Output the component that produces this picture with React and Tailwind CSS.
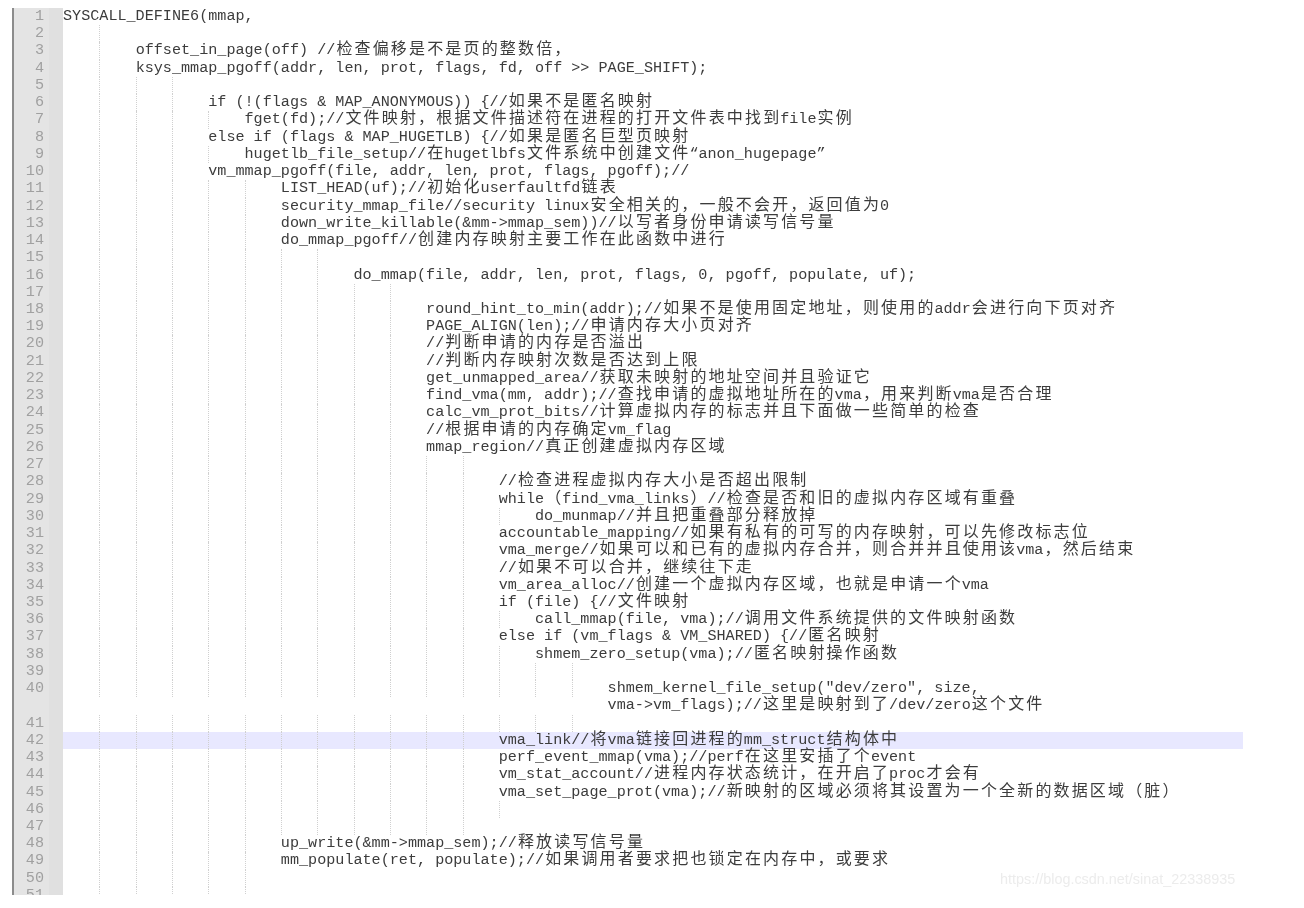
const lines = [
  { n: 1, k: 0, text: "SYSCALL_DEFINE6(mmap," },
  { n: 2, guides: 1 },
  { n: 3, k: 2, text: "offset_in_page(off) //检查偏移是不是页的整数倍，" },
  { n: 4, k: 2, text: "ksys_mmap_pgoff(addr, len, prot, flags, fd, off >> PAGE_SHIFT);" },
  { n: 5, guides: 3 },
  { n: 6, k: 4, text: "if (!(flags & MAP_ANONYMOUS)) {//如果不是匿名映射" },
  { n: 7, k: 5, text: "fget(fd);//文件映射，根据文件描述符在进程的打开文件表中找到file实例" },
  { n: 8, k: 4, text: "else if (flags & MAP_HUGETLB) {//如果是匿名巨型页映射" },
  { n: 9, k: 5, text: "hugetlb_file_setup//在hugetlbfs文件系统中创建文件“anon_hugepage”" },
  { n: 10, k: 4, text: "vm_mmap_pgoff(file, addr, len, prot, flags, pgoff);//" },
  { n: 11, k: 6, text: "LIST_HEAD(uf);//初始化userfaultfd链表" },
  { n: 12, k: 6, text: "security_mmap_file//security linux安全相关的，一般不会开，返回值为0" },
  { n: 13, k: 6, text: "down_write_killable(&mm->mmap_sem))//以写者身份申请读写信号量" },
  { n: 14, k: 6, text: "do_mmap_pgoff//创建内存映射主要工作在此函数中进行" },
  { n: 15, guides: 7 },
  { n: 16, k: 8, text: "do_mmap(file, addr, len, prot, flags, 0, pgoff, populate, uf);" },
  { n: 17, guides: 9 },
  { n: 18, k: 10, text: "round_hint_to_min(addr);//如果不是使用固定地址，则使用的addr会进行向下页对齐" },
  { n: 19, k: 10, text: "PAGE_ALIGN(len);//申请内存大小页对齐" },
  { n: 20, k: 10, text: "//判断申请的内存是否溢出" },
  { n: 21, k: 10, text: "//判断内存映射次数是否达到上限" },
  { n: 22, k: 10, text: "get_unmapped_area//获取未映射的地址空间并且验证它" },
  { n: 23, k: 10, text: "find_vma(mm, addr);//查找申请的虚拟地址所在的vma，用来判断vma是否合理" },
  { n: 24, k: 10, text: "calc_vm_prot_bits//计算虚拟内存的标志并且下面做一些简单的检查" },
  { n: 25, k: 10, text: "//根据申请的内存确定vm_flag" },
  { n: 26, k: 10, text: "mmap_region//真正创建虚拟内存区域" },
  { n: 27, guides: 11 },
  { n: 28, k: 12, text: "//检查进程虚拟内存大小是否超出限制" },
  { n: 29, k: 12, text: "while（find_vma_links）//检查是否和旧的虚拟内存区域有重叠" },
  { n: 30, k: 13, text: "do_munmap//并且把重叠部分释放掉" },
  { n: 31, k: 12, text: "accountable_mapping//如果有私有的可写的内存映射，可以先修改标志位" },
  { n: 32, k: 12, text: "vma_merge//如果可以和已有的虚拟内存合并，则合并并且使用该vma，然后结束" },
  { n: 33, k: 12, text: "//如果不可以合并，继续往下走" },
  { n: 34, k: 12, text: "vm_area_alloc//创建一个虚拟内存区域，也就是申请一个vma" },
  { n: 35, k: 12, text: "if (file) {//文件映射" },
  { n: 36, k: 13, text: "call_mmap(file, vma);//调用文件系统提供的文件映射函数" },
  { n: 37, k: 12, text: "else if (vm_flags & VM_SHARED) {//匿名映射" },
  { n: 38, k: 13, text: "shmem_zero_setup(vma);//匿名映射操作函数" },
  { n: 39, guides: 14 },
  { n: 40, k: 15, text: 'shmem_kernel_file_setup("dev/zero", size,' },
  { k: 15, guides: 0, text: "vma->vm_flags);//这里是映射到了/dev/zero这个文件" },
  { n: 41, guides: 14 },
  { n: 42, k: 12, active: true, text: "vma_link//将vma链接回进程的mm_struct结构体中" },
  { n: 43, k: 12, text: "perf_event_mmap(vma);//perf在这里安插了个event" },
  { n: 44, k: 12, text: "vm_stat_account//进程内存状态统计，在开启了proc才会有" },
  { n: 45, k: 12, text: "vma_set_page_prot(vma);//新映射的区域必须将其设置为一个全新的数据区域（脏）" },
  { n: 46, guides: 12 },
  { n: 47, guides: 11 },
  { n: 48, k: 6, text: "up_write(&mm->mmap_sem);//释放读写信号量" },
  { n: 49, k: 6, text: "mm_populate(ret, populate);//如果调用者要求把也锁定在内存中，或要求" },
  { n: 50, guides: 5 },
  { n: 51, guides: 5 },
];

// CJK runs sit on a two-column pitch, so a 16px glyph gets tracking up to 18.16px
function CodeText({ text }) {
  const parts = text.split(/([\u3000-\u9fff\uff00-\uffef]+)/);
  return parts.map((part, i) =>
    i % 2 === 1 ? (
      <span
        key={i}
        className="ml-[1.08px] mr-[-1.08px] font-['Noto_Sans_CJK_SC',sans-serif] text-[16px] leading-[0] tracking-[2.16px]"
      >
        {part}
      </span>
    ) : (
      part
    )
  );
}

function Row({ n, k = 0, text, guides, active }) {
  const guideCount = guides ?? Math.max(k - 1, 0);

  return (
    <div className="flex h-[17.24px] leading-[17.24px]">
      <div className="flex w-[51px] shrink-0 border-l-2 border-[#8c8c8c] bg-[#e4e4e4]">
        <span className="w-[30px] text-right text-[15.14px] text-[#a0a0a0]">{n}</span>
        <span className="ml-auto h-full w-[14px] bg-[#e0e0e0]" />
      </div>
      <div className={`relative flex-1 ${active ? "bg-[#e8e8ff]" : ""}`}>
        <div className="absolute inset-y-0 left-px flex">
          {Array.from({ length: guideCount }, (_, i) => (
            <span key={i} className="h-full w-[36.35px] shrink-0 border-r border-dotted border-[#d0d0d0]" />
          ))}
        </div>
        {text && (
          <div className="relative whitespace-pre text-[15.14px] text-[#3c3c3c]">
            {" ".repeat(k * 4)}
            <CodeText text={text} />
          </div>
        )}
      </div>
    </div>
  );
}

export default function App() {
  return (
    <div className="relative h-[908px] w-[1304px] overflow-hidden bg-white pl-3 pt-2 font-['Liberation_Mono',monospace] blur-[0.45px]">
      <div className="h-[887px] w-[1231px] overflow-hidden">
        {lines.map((line, i) => (
          <Row key={i} {...line} />
        ))}
      </div>
      <div className="absolute left-[1000px] top-[869px] font-['Liberation_Sans',sans-serif] text-[14.4px] text-[#ececec]">
        https://blog.csdn.net/sinat_22338935
      </div>
    </div>
  );
}
